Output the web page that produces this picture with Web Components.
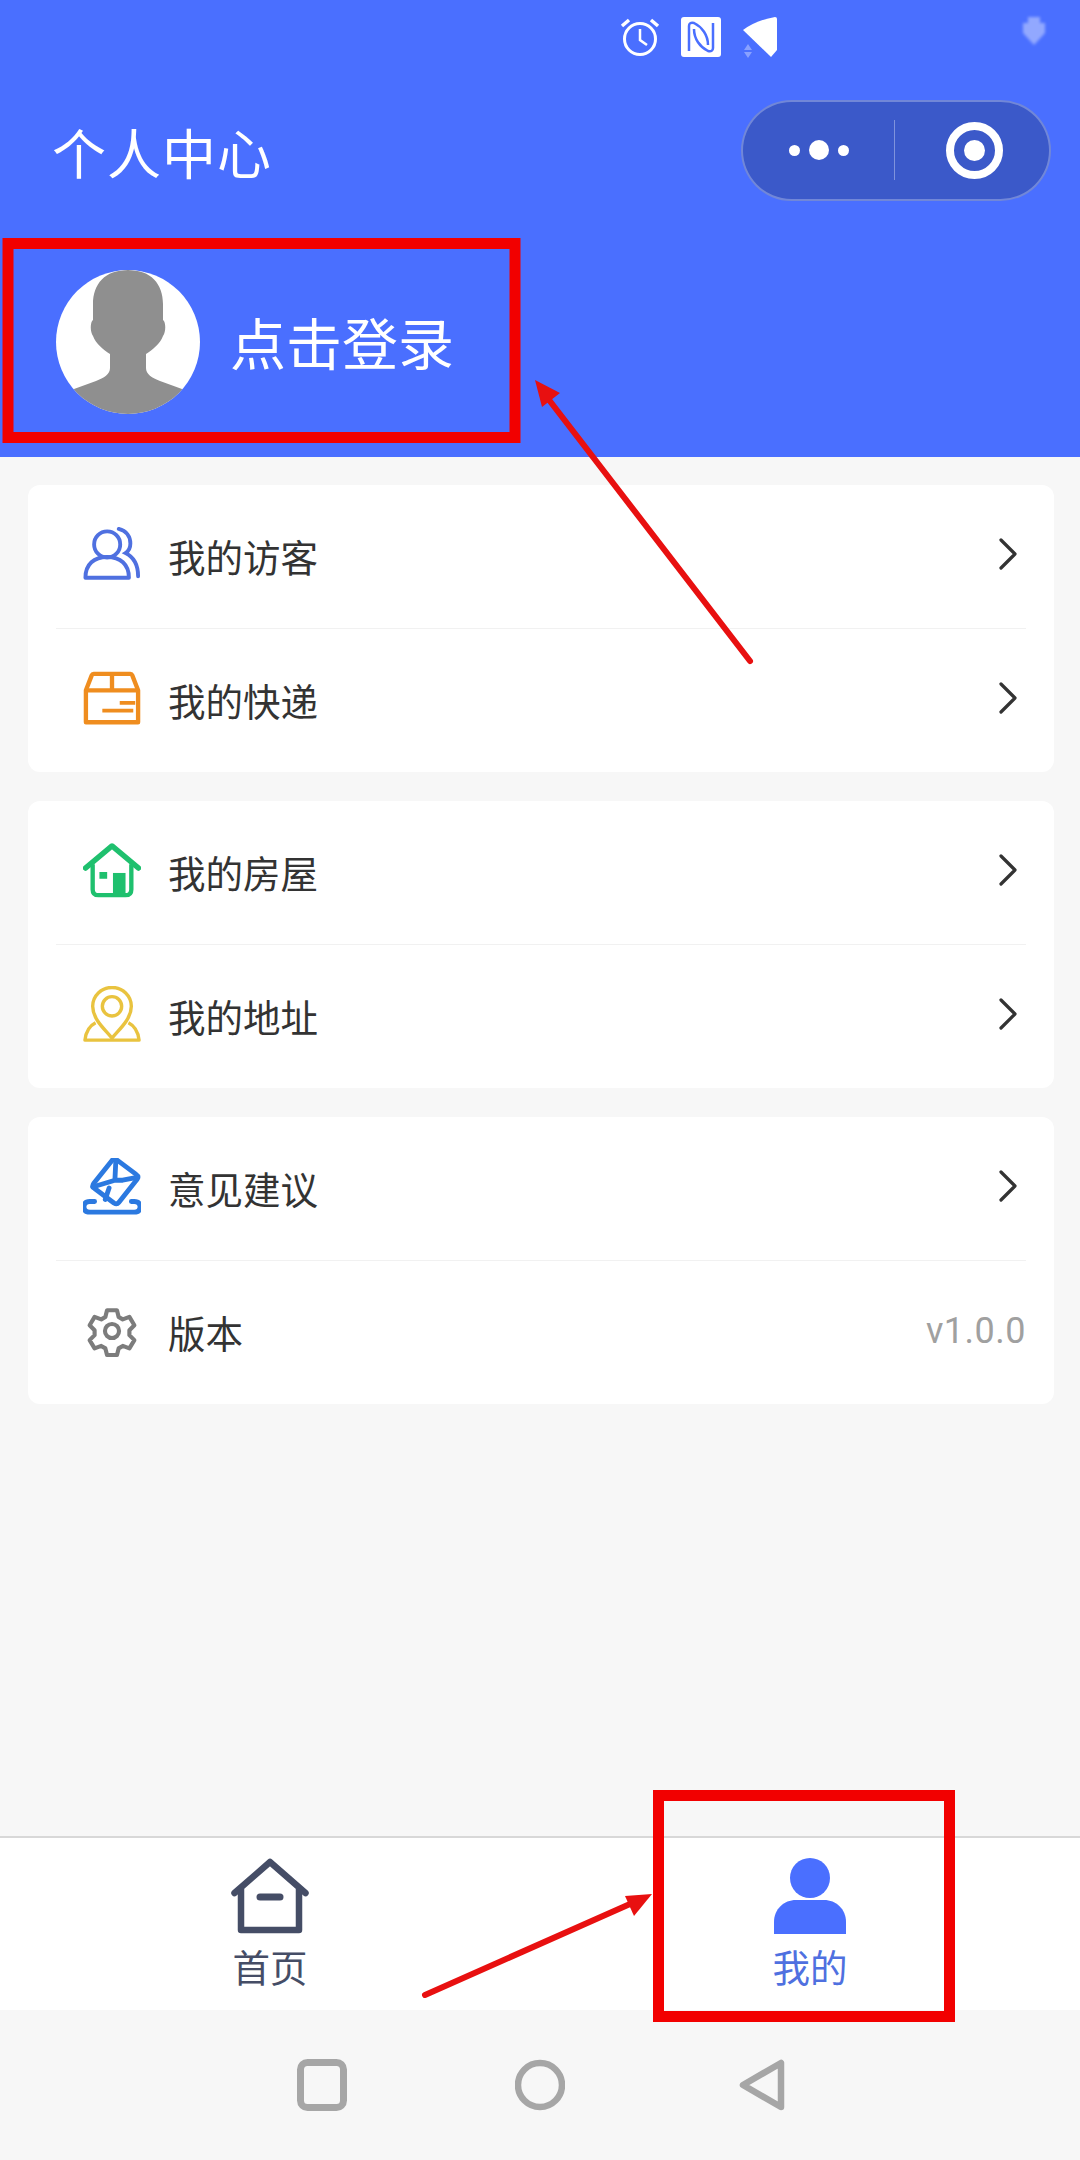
<!DOCTYPE html>
<html lang="zh">
<head>
<meta charset="utf-8">
<title>个人中心</title>
<style>
  html, body { margin: 0; padding: 0; }
  body { width: 1080px; height: 2160px; overflow: hidden; font-family: "Noto Sans CJK SC", "Noto Sans", sans-serif; }
</style>
</head>
<body>
<profile-page>
  <user-header slot="header" heading="个人中心" login="点击登录"></user-header>

  <menu-card>
    <menu-row label="我的访客" icon="visitor"></menu-row>
    <menu-row label="我的快递" icon="parcel"></menu-row>
  </menu-card>
  <menu-card>
    <menu-row label="我的房屋" icon="house"></menu-row>
    <menu-row label="我的地址" icon="address"></menu-row>
  </menu-card>
  <menu-card>
    <menu-row label="意见建议" icon="mail"></menu-row>
    <menu-row label="版本" icon="gear" value="v1.0.0"></menu-row>
  </menu-card>

  <tab-bar slot="footer">
    <tab-item label="首页" icon="home"></tab-item>
    <tab-item label="我的" icon="me" active></tab-item>
  </tab-bar>
  <system-nav slot="footer"></system-nav>
  <mark-overlay slot="overlay"></mark-overlay>
</profile-page>

<script>
const ICONS = {
  visitor: `<svg viewBox="0 0 60 56" fill="none" stroke="#4f70e0" stroke-width="4">
    <circle cx="25" cy="18" r="13.5"/>
    <path d="M2.5 52.5c0-14 9-21.5 22.500-21.500s22.500 7.500 22.500 21.500z" stroke-linejoin="round"/>
    <path d="M37 2c8 2 12 8 12 15 0 4-2 8-5 10 8 4 13 12 13 24" stroke-linecap="round"/>
  </svg>`,
  parcel: `<svg viewBox="0 0 60 56" fill="none" stroke="#ef8d1f" stroke-width="4.500">
    <path d="M3 20l6-15.500q.6-1.500 2-1.500h38q1.400 0 2 1.500l6 15.500v33h-54z" stroke-linejoin="round"/>
    <path d="M3 20h54M30 3v17"/>
    <path d="M38 33h16M20 41h32" stroke-width="4"/>
  </svg>`,
  house: `<svg viewBox="0 0 60 56" fill="none" stroke="#1fc06e" stroke-width="4.500">
    <path d="M2.500 26l27.500-23 27.500 23" stroke-width="5.500" stroke-linecap="round" stroke-linejoin="round"/>
    <path d="M10 22v26q0 6 6 6h28q6 0 6-6v-26"/>
    <rect x="17" y="30" width="8" height="7" fill="#1fc06e" stroke="none"/>
    <rect x="31" y="31" width="13" height="23" fill="#1fc06e" stroke="none"/>
  </svg>`,
  address: `<svg viewBox="0 0 60 58" fill="none" stroke="#e9c33f" stroke-width="3.500" stroke-linejoin="round">
    <path d="M30 54c-6-8-20-19-20-33a20 19.500 0 0 1 40 0c0 14-14 25-20 33z"/>
    <circle cx="30" cy="21" r="10"/>
    <path d="M13 38c-6 3-10 9-11 18h56c-1-9-5-15-11-18"/>
  </svg>`,
  mail: `<svg viewBox="0 0 60 58" fill="none" stroke="#2b79e0" stroke-width="5" stroke-linejoin="round" stroke-linecap="round">
    <path d="M35 2l20 15q3 2 1 5l-19 24q-2 2.500-5 .5l-20-15q-3-2-1-5l19-24q2-2.500 5-.5z"/>
    <path d="M34 2l-1 21-23 7M33 23l8 0 15-3M27 31l-4 12"/>
    <path d="M12 45h-5q-6 0-6 5.500t6 5.500h46q6 0 6-5.500t-6-5.500h-3"/>
  </svg>`,
  gear: `<svg viewBox="-5 -5 70 70" fill="none" stroke="#7c7c7c" stroke-width="5" stroke-linejoin="round">
    <path d="M24 5h12l2 8 5 3 8-3 6 10-6 6v6l6 6-6 10-8-3-5 3-2 8h-12l-2-8-5-3-8 3-6-10 6-6v-6l-6-6 6-10 8 3 5-3z"/>
    <circle cx="30" cy="30" r="8.500"/>
  </svg>`,
  home: `<svg viewBox="0 0 78 76" fill="none" stroke="#454d66" stroke-width="6.500" stroke-linejoin="round" stroke-linecap="round">
    <path d="M3.500 35l35.500-31 35.500 31"/>
    <path d="M10 31v41h58v-41" stroke-linecap="butt"/>
    <path d="M29 39h20" stroke-width="7"/>
  </svg>`,
  me: `<svg viewBox="0 0 72 76"><ellipse cx="36" cy="20" rx="20" ry="20" fill="#4a6fff"/>
    <path d="M0 76v-12c0-13 10-22 22-22h28c12 0 22 9 22 22v12q0 0-4 0h-64q-4 0-4 0z" fill="#4a6fff"/>
  </svg>`
};

class ProfilePage extends HTMLElement {
  constructor() {
    super();
    this.attachShadow({ mode: 'open' });
    this.shadowRoot.innerHTML = `
    <style>
      :host { display: flex; flex-direction: column; position: relative; width: 1080px; height: 2160px; background: #f7f7f7; overflow: hidden; }
      main { flex: 1; display: flex; flex-direction: column; gap: 29px; padding: 28px 26px 0 28px; }
    </style>
    <slot name="header"></slot>
    <main><slot></slot></main>
    <slot name="footer"></slot>
    <slot name="overlay"></slot>`;
  }
}
customElements.define('profile-page', ProfilePage);

class UserHeader extends HTMLElement {
  constructor() {
    super();
    this.attachShadow({ mode: 'open' });
    this.shadowRoot.innerHTML = `
    <style>
      :host { display: block; height: 457px; box-sizing: border-box; background: #4a6fff; color: #fff; }
      .status { height: 78px; display: flex; align-items: flex-start; padding: 17px 0 0 620px; box-sizing: border-box; }
      .status svg { display: block; }
      .nfc { margin-left: 21px; }
      .signal { margin-left: 21px; }
      .battery { margin-left: 243px; opacity: .4; filter: blur(1.500px); }
      .title-row { height: 150px; display: flex; align-items: center; justify-content: space-between; padding: 0 29px 0 52px; }
      h1 { margin: 0; font-size: 54px; font-weight: 400; line-height: 1; letter-spacing: 1px; position: relative; top: -1px; }
      .capsule { width: 310px; height: 101px; box-sizing: border-box; display: flex; align-items: center; border: 2px solid rgba(255,255,255,.28); border-radius: 51px; background: #3b59c9; position: relative; top: -3px; }
      .capsule div { flex: 1; display: flex; justify-content: center; align-items: center; }
      .dots { gap: 9px; padding-left: 2px; }
      .capsule div + div { border-left: 1.500px solid rgba(255,255,255,.35); height: 60px; padding-left: 6px; }
      .dots i { width: 11px; height: 11px; border-radius: 50%; background: #fff; }
      .dots i:nth-child(2) { width: 20px; height: 20px; }
      .ring { width: 57px; height: 57px; box-sizing: border-box; border: 8px solid #fff; border-radius: 50%; display: flex; align-items: center; justify-content: center; }
      .ring b { width: 21px; height: 21px; border-radius: 50%; background: #fff; }
      .login { display: flex; align-items: center; gap: 30px; padding: 42px 0 0 56px; }
      .avatar { width: 144px; height: 144px; border-radius: 50%; background: #fff; overflow: hidden; flex: none; }
      .avatar svg { display: block; }
      .name { font-size: 56px; font-weight: 400; line-height: 1; position: relative; top: -1px; }
    </style>
    <div class="status">
      <svg width="40" height="40" viewBox="0 0 40 40" fill="none" stroke="#fff" stroke-width="3"><circle cx="20" cy="22" r="15.500"/><path d="M20 12v11l7 5" stroke-width="2.500"/><path d="M2 9l7-6M38 9l-7-6" stroke-width="3.500"/></svg>
      <svg class="nfc" width="40" height="40" viewBox="0 0 40 40"><rect width="40" height="40" rx="3" fill="#fff"/><path d="M8 34V9q0-4 5-3c8 4 14 12 14 22M32 6v25q0 4-5 3c-8-4-14-12-14-22" fill="none" stroke="#4a6fff" stroke-width="2.500"/></svg>
      <svg class="signal" width="37" height="42" viewBox="0 0 37 42"><path d="M1 13Q15 3 33 0q2 0 2 2v31l-6 7z" fill="#fff"/><path d="M2 33l4-6 4 6zM2 35l4 6 4-6z" fill="#fff" opacity=".35"/></svg>
      <svg class="battery" width="24" height="28" viewBox="0 0 24 28"><path d="M6 0h12v6h5v10l-11 12-11-12v-10h5z" fill="#fff"/></svg>
    </div>
    <div class="title-row">
      <h1></h1>
      <div class="capsule">
        <div class="dots"><i></i><i></i><i></i></div>
        <div><span class="ring"><b></b></span></div>
      </div>
    </div>
    <div class="login">
      <div class="avatar">
        <svg width="144" height="144" viewBox="0 0 144 144"><path d="M72 0c23 0 35 14 35 34v16c3 2 3 12 0 16-3 8-11 14-17 18v14c0 6 6 10 14 13l22 8v25h-108v-25l22-8c8-3 14-7 14-13v-14c-6-4-14-10-17-18-3-4-3-14 0-16v-16c0-20 12-34 35-34z" fill="#8f8f8f"/></svg>
      </div>
      <span class="name"></span>
    </div>`;
  }

  connectedCallback() {
    this.shadowRoot.querySelector('h1').textContent = this.getAttribute('heading');
    this.shadowRoot.querySelector('.name').textContent = this.getAttribute('login');
  }
}
customElements.define('user-header', UserHeader);

class MenuCard extends HTMLElement {
  constructor() {
    super();
    this.attachShadow({ mode: 'open' });
    this.shadowRoot.innerHTML = `
    <style>
      :host { display: block; background: #fff; border-radius: 12px; padding: 0 28px; }
      ::slotted(menu-row:first-child) { border-bottom: 1px solid #f1f1f1; }
    </style>
    <slot></slot>`;
  }
}
customElements.define('menu-card', MenuCard);

class MenuRow extends HTMLElement {
  constructor() {
    super();
    this.attachShadow({ mode: 'open' });
    this.shadowRoot.innerHTML = `
    <style>
      :host { display: flex; align-items: center; height: 143px; color: #333; }
      .icon { width: 58px; margin-left: 27px; flex: none; display: flex; position: relative; top: -2px; }
      .icon svg { width: 100%; display: block; }
      .label { margin-left: 27px; font-size: 37.5px; font-weight: 400; line-height: 1; flex: 1; position: relative; top: -1px; }
      .value { font: 36px Roboto, "Liberation Sans", sans-serif; color: #a0a0a0; letter-spacing: .5px; position: relative; top: -2px; }
      .chevron { margin-right: 8px; position: relative; top: -3px; }
    </style>
    <span class="icon"></span><span class="label"></span>`;
  }

  connectedCallback() {
    const root = this.shadowRoot;
    root.querySelector('.icon').innerHTML = ICONS[this.getAttribute('icon')];
    root.querySelector('.label').textContent = this.getAttribute('label');
    const value = this.getAttribute('value');
    if (value) {
      const span = document.createElement('span');
      span.className = 'value';
      span.textContent = value;
      root.append(span);
    } else {
      const tpl = document.createElement('template');
      tpl.innerHTML = `<svg class="chevron" width="20" height="32" viewBox="0 0 20 32" fill="none" stroke="#333" stroke-width="3.2" stroke-linecap="round" stroke-linejoin="round"><path d="M3 2l14 14-14 14"/></svg>`;
      root.append(tpl.content.cloneNode(true));
    }
  }
}
customElements.define('menu-row', MenuRow);

class TabBar extends HTMLElement {
  constructor() {
    super();
    this.attachShadow({ mode: 'open' });
    this.shadowRoot.innerHTML = `
    <style>
      :host { display: grid; grid-template-columns: 1fr 1fr; height: 174px; box-sizing: border-box; background: #fff; border-top: 2px solid #d8d8d8; }
    </style>
    <slot></slot>`;
  }
}
customElements.define('tab-bar', TabBar);

class TabItem extends HTMLElement {
  constructor() {
    super();
    this.attachShadow({ mode: 'open' });
    this.shadowRoot.innerHTML = `
    <style>
      :host { display: flex; flex-direction: column; align-items: center; padding-top: 20px; color: #454d66; }
      :host([active]) { color: #4f70e0; }
      .icon { width: 78px; height: 76px; display: flex; justify-content: center; }
      .icon svg { height: 100%; display: block; }
      .label { margin-top: 11px; font-size: 37.5px; font-weight: 400; line-height: 1.1; }
    </style>
    <span class="icon"></span><span class="label"></span>`;
  }

  connectedCallback() {
    this.shadowRoot.querySelector('.icon').innerHTML = ICONS[this.getAttribute('icon')];
    this.shadowRoot.querySelector('.label').textContent = this.getAttribute('label');
  }
}
customElements.define('tab-item', TabItem);

class SystemNav extends HTMLElement {
  constructor() {
    super();
    this.attachShadow({ mode: 'open' });
    this.shadowRoot.innerHTML = `
    <style>
      :host { display: flex; justify-content: center; align-items: center; height: 150px; background: #f7f7f7; box-sizing: border-box; padding-left: 2px; }
      svg { display: block; }
      .circle { margin: 0 174px 0 168px; }
    </style>
    <svg width="50" height="52" viewBox="0 0 50 52"><rect x="3.500" y="3.500" width="43" height="45" rx="7" fill="none" stroke="#a6a6a6" stroke-width="7"/></svg>
    <svg class="circle" width="50" height="52" viewBox="0 0 50 52"><circle cx="25" cy="26" r="22" fill="none" stroke="#a6a6a6" stroke-width="6.500"/></svg>
    <svg width="46" height="52" viewBox="0 0 46 52"><path d="M42 4v44l-38-22z" fill="none" stroke="#a6a6a6" stroke-width="6.500" stroke-linejoin="round"/></svg>`;
  }
}
customElements.define('system-nav', SystemNav);

// red annotations drawn over the screenshot
class MarkOverlay extends HTMLElement {
  constructor() {
    super();
    this.attachShadow({ mode: 'open' });
    this.shadowRoot.innerHTML = `
    <style>
      :host { position: absolute; inset: 0; pointer-events: none; }
      svg { display: block; }
    </style>
    <svg width="1080" height="2160" viewBox="0 0 1080 2160" fill="none">
      <rect x="8" y="243.500" width="507" height="194" stroke="#f20000" stroke-width="11"/>
      <rect x="658.500" y="1795.500" width="291" height="221" stroke="#f20000" stroke-width="11"/>
      <path d="M750 661L546 396" stroke="#e81010" stroke-width="6" stroke-linecap="round"/>
      <path d="M535 380l25 13-18 14z" fill="#e81010"/>
      <path d="M425 1995L630 1904" stroke="#e81010" stroke-width="6" stroke-linecap="round"/>
      <path d="M652 1894l-18 22-9-20z" fill="#e81010"/>
    </svg>`;
  }
}
customElements.define('mark-overlay', MarkOverlay);
</script>
</body>
</html>
